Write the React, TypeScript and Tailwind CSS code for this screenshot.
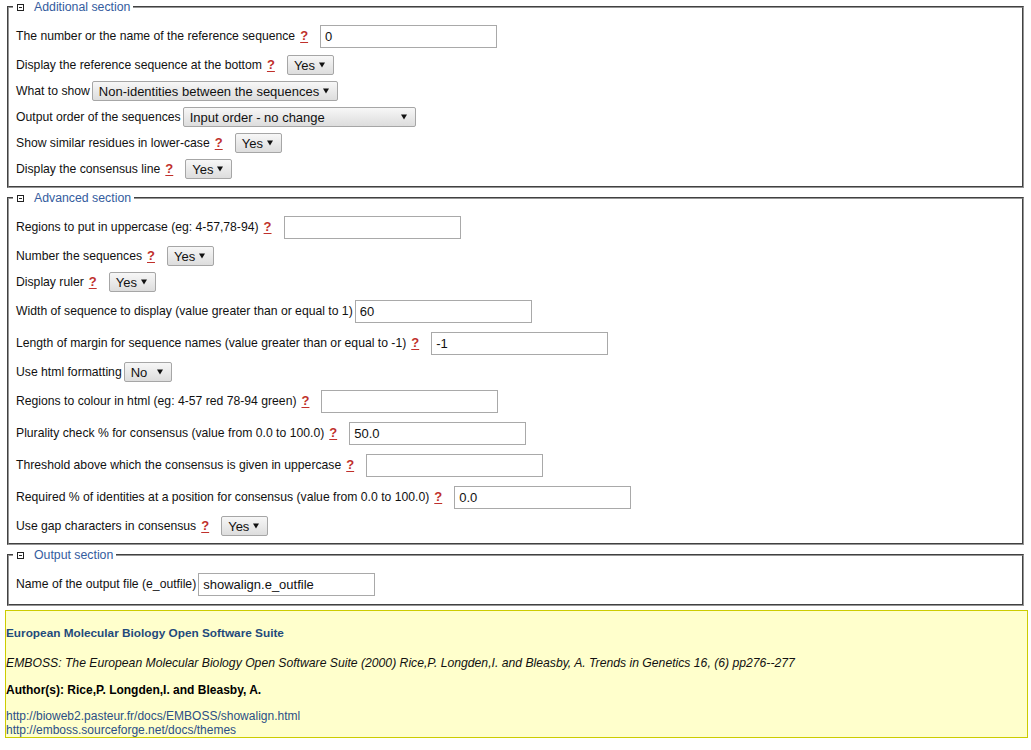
import React from "react";

type Row =
  | { kind: "input"; label: string; help?: boolean; value: string }
  | { kind: "select"; label: string; help?: boolean; value: string; width: string };

const additional: Row[] = [
  { kind: "input", label: "The number or the name of the reference sequence", help: true, value: "0" },
  { kind: "select", label: "Display the reference sequence at the bottom", help: true, value: "Yes", width: "w-[47px]" },
  { kind: "select", label: "What to show", value: "Non-identities between the sequences", width: "w-[246px]" },
  { kind: "select", label: "Output order of the sequences", value: "Input order - no change", width: "w-[233px]" },
  { kind: "select", label: "Show similar residues in lower-case", help: true, value: "Yes", width: "w-[47px]" },
  { kind: "select", label: "Display the consensus line", help: true, value: "Yes", width: "w-[47px]" },
];

const advanced: Row[] = [
  { kind: "input", label: "Regions to put in uppercase (eg: 4-57,78-94)", help: true, value: "" },
  { kind: "select", label: "Number the sequences", help: true, value: "Yes", width: "w-[47px]" },
  { kind: "select", label: "Display ruler", help: true, value: "Yes", width: "w-[47px]" },
  { kind: "input", label: "Width of sequence to display (value greater than or equal to 1)", value: "60" },
  { kind: "input", label: "Length of margin for sequence names (value greater than or equal to -1)", help: true, value: "-1" },
  { kind: "select", label: "Use html formatting", value: "No", width: "w-[48px]" },
  { kind: "input", label: "Regions to colour in html (eg: 4-57 red 78-94 green)", help: true, value: "" },
  { kind: "input", label: "Plurality check % for consensus (value from 0.0 to 100.0)", help: true, value: "50.0" },
  { kind: "input", label: "Threshold above which the consensus is given in uppercase", help: true, value: "" },
  { kind: "input", label: "Required % of identities at a position for consensus (value from 0.0 to 100.0)", help: true, value: "0.0" },
  { kind: "select", label: "Use gap characters in consensus", help: true, value: "Yes", width: "w-[47px]" },
];

const output: Row[] = [
  { kind: "input", label: "Name of the output file (e_outfile)", value: "showalign.e_outfile" },
];

function Control({ row }: { row: Row }) {
  const gap = row.help ? "ml-[12px]" : "ml-[2px]";
  if (row.kind === "input") {
    return (
      <input
        type="text"
        defaultValue={row.value}
        className={`${gap} h-[23px] w-[177px] border border-[#a9a9a9] bg-white px-[4px] text-[13px] text-[#111] outline-none`}
      />
    );
  }
  return (
    <div
      className={`${gap} ${row.width} relative flex h-[20px] items-center rounded-[2px] border border-[#a6a6a6] bg-gradient-to-b from-[#f7f7f7] to-[#dddddd] pl-[6px] text-[13px] text-[#111]`}
    >
      <span className="whitespace-nowrap leading-[17px]">{row.value}</span>
      <svg
        className="pointer-events-none absolute right-[8px] top-[6px]"
        width="6"
        height="6"
        viewBox="0 0 6 6"
      >
        <path d="M0 0.5 H6 L3 5.5 Z" fill="#111" />
      </svg>
    </div>
  );
}

function FormRow({ row }: { row: Row }) {
  return (
    <div className={`flex items-center ${row.kind === "input" ? "h-[32px]" : "h-[26px]"}`}>
      <span className="whitespace-nowrap text-[12.2px] text-[#111]">{row.label}</span>
      {row.help && (
        <a className="ml-[5px] text-[13px] font-bold text-[#c0302b] underline decoration-1 underline-offset-2">?</a>
      )}
      <Control row={row} />
    </div>
  );
}

function Section({ title, rows, top }: { title: string; rows: Row[]; top: string }) {
  return (
    <fieldset className={`${top} mx-[2px] border-2 border-[#959595] [border-style:groove] pb-[4px] pl-[7px] pt-[6px]`}>
      <legend className="ml-[-3px] flex items-center px-[3px] leading-[14px]">
        <span className="ml-[1px] flex h-[7px] w-[7px] items-center justify-center border border-[#222] bg-white">
          <span className="h-[1px] w-[3px] bg-[#222]" />
        </span>
        <span className="ml-[10px] text-[12.3px] text-[#345c9e]">{title}</span>
      </legend>
      {rows.map((r, i) => (
        <FormRow key={i} row={r} />
      ))}
    </fieldset>
  );
}

export default function App() {
  return (
    <div className="min-h-[750px] bg-white px-[5px] font-['Liberation_Sans',Arial,sans-serif]">
      <Section title="Additional section" rows={additional} top="mt-0" />
      <Section title="Advanced section" rows={advanced} top="mt-[3px]" />
      <Section title="Output section" rows={output} top="mt-[3px]" />
      <div className="mt-[4px] w-[1023px] border border-[#cccc00] bg-[#ffffcc] text-[12px] leading-[14px]">
        <div className="mt-[15px] text-[11.8px] font-bold text-[#1f4a7c]">European Molecular Biology Open Software Suite</div>
        <div className="mt-[16px] text-[12.2px] italic text-[#111]">
          EMBOSS: The European Molecular Biology Open Software Suite (2000) Rice,P. Longden,I. and Bleasby, A. Trends in Genetics 16, (6) pp276--277
        </div>
        <div className="mt-[13px] font-bold text-black">Author(s): Rice,P. Longden,I. and Bleasby, A.</div>
        <div className="mt-[12px] text-[#2b4f86]">
          <div>http://bioweb2.pasteur.fr/docs/EMBOSS/showalign.html</div>
          <div>http://emboss.sourceforge.net/docs/themes</div>
        </div>
      </div>
    </div>
  );
}
